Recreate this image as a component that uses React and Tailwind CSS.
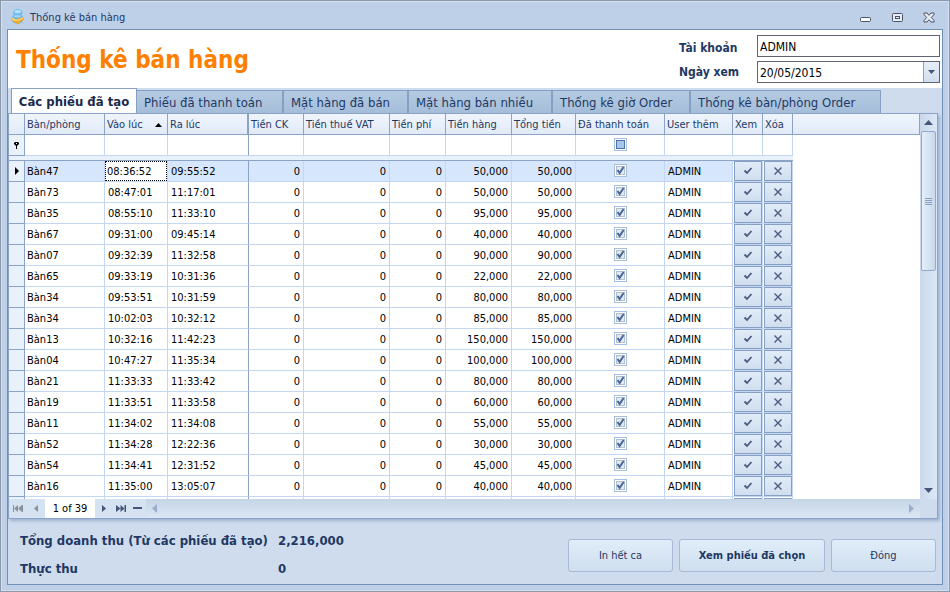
import React, { useEffect, useRef } from "react";

const rows = [
  ["Bàn47", "08:36:52", "09:55:52", "50,000"],
  ["Bàn73", "08:47:01", "11:17:01", "50,000"],
  ["Bàn35", "08:55:10", "11:33:10", "95,000"],
  ["Bàn67", "09:31:00", "09:45:14", "40,000"],
  ["Bàn07", "09:32:39", "11:32:58", "90,000"],
  ["Bàn65", "09:33:19", "10:31:36", "22,000"],
  ["Bàn34", "09:53:51", "10:31:59", "80,000"],
  ["Bàn34", "10:02:03", "10:32:12", "85,000"],
  ["Bàn13", "10:32:16", "11:42:23", "150,000"],
  ["Bàn04", "10:47:27", "11:35:34", "100,000"],
  ["Bàn21", "11:33:33", "11:33:42", "80,000"],
  ["Bàn19", "11:33:51", "11:33:58", "60,000"],
  ["Bàn11", "11:34:02", "11:34:08", "55,000"],
  ["Bàn52", "11:34:28", "12:22:36", "30,000"],
  ["Bàn54", "11:34:41", "12:31:52", "45,000"],
  ["Bàn16", "11:35:00", "13:05:07", "40,000"],
];

const tabs = [
  ["Phiếu đã thanh toán", "w-[147px] border-r-2"],
  ["Mặt hàng đã bán", "w-[125px] border-r-2"],
  ["Mặt hàng bán nhiều", "w-[144px] border-r-2"],
  ["Thống kê giờ Order", "w-[138px] border-r-2"],
  ["Thống kê bàn/phòng Order", "w-[190px] border-r"],
];

const headers = [
  "Bàn/phòng", "Vào lúc", "Ra lúc", "Tiền CK", "Tiền thuế VAT", "Tiền phí",
  "Tiền hàng", "Tổng tiền", "Đã thanh toán", "User thêm", "Xem", "Xóa",
];

const base = "border-r border-b border-[#c3d7f3] p-0";

function Triangle({ dir, className }) {
  const shapes = {
    up: "M0 5 L4.5 0 L9 5 Z",
    down: "M0 0 L9 0 L4.5 5 Z",
    left: "M5 0 L5 9 L0 4.5 Z",
    right: "M0 0 L5 4.5 L0 9 Z",
  };
  const tall = dir === "left" || dir === "right";
  return (
    <svg width={tall ? 5 : 9} height={tall ? 9 : 5} className={className} fill="currentColor" aria-hidden="true">
      <path d={shapes[dir]} />
    </svg>
  );
}

function CheckBox({ label, mixed }) {
  const ref = useRef(null);
  useEffect(() => {
    ref.current.indeterminate = Boolean(mixed);
  }, [mixed]);
  return (
    <span className="mx-auto grid size-[13px]">
      <input
        ref={ref}
        type="checkbox"
        aria-label={label}
        defaultChecked={!mixed}
        className="col-start-1 row-start-1 size-[13px] appearance-none border border-[#a6bfe0] bg-white"
      />
      <svg width="13" height="13" viewBox="0 0 13 13" className="pointer-events-none col-start-1 row-start-1" aria-hidden="true">
        {mixed ? (
          <rect x="2.5" y="2.5" width="8" height="8" fill="#a9c6e8" stroke="#4f73a8" />
        ) : (
          <>
            <rect x="2.5" y="2.5" width="8" height="8" fill="#e4e9f0" stroke="#b4bdca" />
            <path d="M3.5 6 L5.6 9 L9.6 3" fill="none" stroke="#46669a" strokeWidth="2" />
          </>
        )}
      </svg>
    </span>
  );
}

function GridButton({ kind, label }) {
  return (
    <button
      type="button"
      aria-label={label}
      className="ml-px flex h-5 w-7 items-center justify-center border border-[#869fc3] bg-linear-to-b from-[#e1ecf8] to-[#cfdeef] text-[#4b5a80]"
    >
      <svg width="10" height="10" viewBox="0 0 10 10" fill="none" stroke="currentColor" aria-hidden="true">
        {kind === "check" ? (
          <path d="M1.5 4.5 L4 7 L8.5 2" strokeWidth="1.8" />
        ) : (
          <path d="M1.5 1.5 L8.5 8.5 M8.5 1.5 L1.5 8.5" strokeWidth="1.4" />
        )}
      </svg>
    </button>
  );
}

function DataRow({ row, first }) {
  const [table, start, end, total] = row;
  const cell = `${base} pt-[2px]`;
  const num = `${base} pt-[2px] pr-[3px] text-right`;
  return (
    <tr className={first ? "h-[21px] bg-[#d5e6fd]" : "h-[21px] bg-white"}>
      <td className="border-r border-b border-[#8ba3c7] bg-[#e9f1fb] p-0">
        {first && (
          <svg width="4" height="8" className="ml-[6px]" aria-hidden="true"><path d="M0 0 L4 4 L0 8 Z" /></svg>
        )}
      </td>
      <td className={`${cell} pl-[2px]`}>{table}</td>
      {first ? (
        <td className={`${base} bg-white`}>
          <span className="block h-5 border border-dotted border-black pl-px leading-[20px]">{start}</span>
        </td>
      ) : (
        <td className={`${cell} pl-[3px]`}>{start}</td>
      )}
      <td className="border-r border-b border-r-[#8ba3c7] border-b-[#c3d7f3] p-0 pt-[2px] pl-[3px]">{end}</td>
      <td className={num}>0</td>
      <td className={num}>0</td>
      <td className={num}>0</td>
      <td className={num}>{total}</td>
      <td className={num}>{total}</td>
      <td className={`${base} pb-px`}><CheckBox label={`Đã thanh toán ${table}`} /></td>
      <td className={`${cell} pl-[3px]`}>ADMIN</td>
      <td className={`${base} bg-white`}><GridButton kind="check" label={`Xem ${table}`} /></td>
      <td className={`${base} bg-white`}><GridButton kind="cross" label={`Xóa ${table}`} /></td>
      <td className="bg-white p-0" />
    </tr>
  );
}

function NextRowEdge() {
  return (
    <tr className="h-[21px] bg-white">
      <td className="border-r border-[#8ba3c7] bg-[#e9f1fb] p-0" />
      {headers.map((name, i) => (
        <td key={name} className={`border-r p-0 ${i === 2 ? "border-[#8ba3c7]" : "border-[#c3d7f3]"}`}>
          {i > 9 && <span className="ml-px block h-5 w-7 border border-[#869fc3] bg-[#e1ecf8]" />}
        </td>
      ))}
      <td className="p-0" />
    </tr>
  );
}

function Grid() {
  return (
    <table className="w-full table-fixed border-separate border-spacing-0 text-left text-[11px] leading-[14px] text-black">
      <colgroup>
        <col className="w-[16px]" />
        <col className="w-[80px]" />
        <col className="w-[63px]" />
        <col className="w-[81px]" />
        <col className="w-[55px]" />
        <col className="w-[86px]" />
        <col className="w-[56px]" />
        <col className="w-[66px]" />
        <col className="w-[64px]" />
        <col className="w-[89px]" />
        <col className="w-[68px]" />
        <col className="w-[30px]" />
        <col className="w-[30px]" />
        <col />
      </colgroup>
      <thead>
        <tr className="h-[21px] bg-linear-to-b from-[#f0f5fc] to-[#dfeaf8] text-[#1f3864]">
          <th className="border-r border-b border-[#8ba3c7] p-0" aria-label="Chọn dòng" />
          {headers.map((name, i) => (
            <th
              key={name}
              className={`border-b border-[#8ba3c7] p-0 pt-[2px] pl-[2px] font-normal whitespace-nowrap ${i === 2 ? "border-r-2" : "border-r"}`}
            >
              {i === 1 ? (
                <span className="flex items-center justify-between pr-[5px]">
                  {name}
                  <svg width="7" height="4" aria-hidden="true"><path d="M0 4 L3.5 0 L7 4 Z" /></svg>
                </span>
              ) : name}
            </th>
          ))}
          <th className="border-r border-b border-[#8ba3c7] p-0" aria-label="Trống" />
        </tr>
        <tr className="h-[21px] bg-white">
          <td className="border-r border-b border-[#8ba3c7] bg-[#e9f1fb] p-0">
            <svg width="5" height="7" viewBox="0 0 5 7" className="ml-[5px]" aria-hidden="true">
              <path d="M1 0 H4 L5 1 V2 L3 4 V7 H2 V4 L0 2 V1 Z" fill="black" />
              <rect x="2" y="1" width="1" height="1" fill="white" />
            </svg>
          </td>
          {headers.map((name, i) => (
            <td
              key={name}
              className={`border-r border-b border-b-[#c3d7f3] p-0 pb-px ${i === 2 ? "border-r-[#8ba3c7]" : "border-r-[#c3d7f3]"}`}
            >
              {i === 8 && <CheckBox label="Lọc đã thanh toán" mixed />}
            </td>
          ))}
          <td className="p-0" />
        </tr>
        <tr className="h-[5px]">
          <td colSpan={13} className="border-b border-[#8ba3c7] bg-[#e9f1fb] p-0" />
          <td className="p-0" />
        </tr>
      </thead>
      <tbody>
        {rows.map((row, i) => (
          <DataRow key={row[1]} row={row} first={i === 0} />
        ))}
        <NextRowEdge />
      </tbody>
    </table>
  );
}

function VerticalScroll() {
  return (
    <div className="flex w-[17px] flex-col items-center bg-linear-to-r from-[#c9d8ea] to-[#dce8f5] text-[#475579]">
      <button type="button" aria-label="Cuộn lên" className="flex h-[17px] w-full items-center justify-center">
        <Triangle dir="up" />
      </button>
      <div className="flex h-[140px] w-[15px] flex-col items-center justify-center gap-px rounded-[2px] border border-[#93a9cb] bg-linear-to-r from-[#e6effa] to-[#c8d8eb]">
        <i className="h-px w-[7px] bg-[#869fc3]" />
        <i className="h-px w-[7px] bg-[#869fc3]" />
        <i className="h-px w-[7px] bg-[#869fc3]" />
        <i className="h-px w-[7px] bg-[#869fc3]" />
      </div>
      <div className="flex-1" />
      <button type="button" aria-label="Cuộn xuống" className="flex h-[17px] w-full items-center justify-center">
        <Triangle dir="down" />
      </button>
    </div>
  );
}

function Navigator() {
  return (
    <div className="flex h-[19px] shrink-0 items-stretch bg-[#d5e2f1] text-[11px] text-black">
      <button type="button" aria-label="Đầu" className="flex w-[18px] items-center justify-center text-[#8b909b]">
        <svg width="10" height="7" fill="currentColor" aria-hidden="true">
          <path d="M0 0 H1 V7 H0 Z M5 0 V7 L1 3.5 Z M9 0 V7 L5 3.5 Z M9 0 H10 V7 H9 Z" />
        </svg>
      </button>
      <button type="button" aria-label="Trước" className="flex w-[18px] items-center justify-center text-[#8b909b]">
        <svg width="4" height="7" fill="currentColor" aria-hidden="true"><path d="M4 0 V7 L0 3.5 Z" /></svg>
      </button>
      <span className="flex w-[50px] items-center justify-center bg-white pt-[2px]">1 of 39</span>
      <button type="button" aria-label="Sau" className="flex w-[18px] items-center justify-center text-[#475579]">
        <svg width="4" height="7" fill="currentColor" aria-hidden="true"><path d="M0 0 V7 L4 3.5 Z" /></svg>
      </button>
      <button type="button" aria-label="Cuối" className="flex w-[15px] items-center justify-center text-[#475579]">
        <svg width="10" height="7" fill="currentColor" aria-hidden="true">
          <path d="M0 0 V7 L4.5 3.5 Z M4.5 0 V7 L8.5 3.5 Z M8.5 0 H10 V7 H8.5 Z" />
        </svg>
      </button>
      <button type="button" aria-label="Xóa dòng" className="flex w-[18px] items-center justify-center text-[#475579]">
        <i className="mb-px h-[2px] w-[9px] bg-current" />
      </button>
      <div className="flex flex-1 items-center justify-between bg-linear-to-b from-[#c6d6e8] to-[#dae6f2] px-[6px] text-[#9daccc]">
        <Triangle dir="left" />
        <Triangle dir="right" />
      </div>
      <div className="w-[17px] bg-[#cfdcee]" />
    </div>
  );
}

function TitleBar() {
  return (
    <header className="flex h-[28px] shrink-0 items-center gap-[6px] pt-[4px] pr-[8px] pl-[4px] text-[11px] text-[#1f3864]">
      <svg width="13" height="16" viewBox="0 0 13 16" aria-hidden="true">
        <ellipse cx="6.5" cy="10" rx="6" ry="5" fill="#6fb6e8" />
        <ellipse cx="6.7" cy="3.8" rx="4.8" ry="3.7" fill="#6fbdf0" />
        <ellipse cx="6.7" cy="2.6" rx="3.4" ry="1.7" fill="#b9e4fc" />
        <ellipse cx="6.5" cy="7.2" rx="3.4" ry="1" fill="#a8d8f6" />
        <path d="M0.4 8 C2 10 4.5 10.4 6.5 10.2 L6.5 8.4 L8.6 9.8 L12.4 8 C13 11 11 12.6 9.4 13 L6.8 15.8 L4.4 13.6 C1.6 13 0.2 11 0.4 8 Z" fill="#f0ab2c" />
        <path d="M1 9 C3 11.4 6 11.6 8 11 L11.8 9" fill="none" stroke="#ffdc78" strokeWidth="1.2" />
      </svg>
      <span className="flex-1 pt-[2px]">Thống kê bán hàng</span>
      <div className="flex gap-[20px] text-[#4b5263]">
        <button type="button" aria-label="Thu nhỏ" className="flex size-[12px] items-center justify-center">
          <svg width="11" height="11" viewBox="0 0 11 11" fill="#fff" stroke="currentColor"><rect x="0.5" y="5.5" width="10" height="4" rx="1" /></svg>
        </button>
        <button type="button" aria-label="Phóng to" className="flex size-[12px] items-center justify-center">
          <svg width="11" height="11" viewBox="0 0 11 11" fill="#e6edf6" stroke="currentColor">
            <rect x="0.5" y="1.5" width="10" height="8" rx="1" />
            <rect x="3.5" y="4.5" width="4" height="2" />
          </svg>
        </button>
        <button type="button" aria-label="Đóng cửa sổ" className="flex size-[12px] items-center justify-center">
          <svg width="12" height="11" viewBox="0 0 12 11" fill="#e6edf6" stroke="currentColor">
            <path d="M1 1 H4 L6 3.3 L8 1 H11 V2.5 L8.3 5.5 L11 8.5 V10 H8 L6 7.7 L4 10 H1 V8.5 L3.7 5.5 L1 2.5 Z" />
          </svg>
        </button>
      </div>
    </header>
  );
}

const actionClass =
  "h-[33px] rounded-[3px] border border-[#a9b8d3] bg-linear-to-b from-[#e0edfa] to-[#cfdfef] pt-[2px] text-[11px] text-[#1f3864]";

export default function App() {
  return (
    <div className="flex h-screen flex-col overflow-hidden border border-[#8d99a8] bg-[#bed0e8] px-[6px] pb-[6px] font-['DejaVu_Sans_Condensed','DejaVu_Sans',sans-serif] shadow-[inset_0_0_0_1px_#d3e0f1]">
      <TitleBar />
      <main className="flex min-h-0 flex-1 flex-col border border-[#6f8fb5] bg-[#cfdcee]">
        <section className="flex h-[58px] shrink-0 items-start justify-between bg-white pl-2">
          <h1 className="pt-[15px] text-[24px] leading-[30px] font-bold text-[#ff8000]">Thống kê bán hàng</h1>
          <form className="grid grid-cols-[78px_183px] gap-y-1 pt-[5px] pr-[2px] text-[#1f3864]">
            <label htmlFor="account" className="pt-[4px] text-[12px] leading-[18px] font-bold">Tài khoản</label>
            <input id="account" type="text" defaultValue="ADMIN" className="h-[22px] w-full border border-[#5f6470] bg-white px-[2px] pt-[2px] text-[12px] text-black" />
            <label htmlFor="day" className="pt-[2px] text-[12px] leading-[18px] font-bold">Ngày xem</label>
            <div className="grid grid-cols-[1fr_16px] border border-[#5f6470]">
              <select id="day" className="col-span-2 col-start-1 row-start-1 h-[20px] appearance-none bg-white px-[2px] pt-[2px] text-[12px] text-black">
                <option>20/05/2015</option>
              </select>
              <span className="pointer-events-none col-start-2 row-start-1 flex items-center justify-center border-l border-[#8ba3c7] bg-linear-to-b from-[#e6eff9] to-[#cfdeef] text-[#475579]">
                <svg width="7" height="4" fill="currentColor" aria-hidden="true"><path d="M0 0 H7 L3.5 4 Z" /></svg>
              </span>
            </div>
          </form>
        </section>
        <nav className="flex h-[25px] shrink-0 items-end pl-[3px] text-[13px] text-[#1f3864]" role="tablist">
          <button type="button" role="tab" aria-selected="true" className="h-[25px] w-[126px] border border-b-0 border-[#869fc3] bg-white pt-px font-bold whitespace-nowrap text-[#1b2a4a]">
            Các phiếu đã tạo
          </button>
          {tabs.map(([name, frame]) => (
            <button
              key={name}
              type="button"
              role="tab"
              aria-selected="false"
              className={`${frame} h-[23px] border-t border-[#869fc3] bg-linear-to-b from-[#b5cbe3] to-[#a5bdd9] pt-px pl-[7px] text-left whitespace-nowrap`}
            >
              {name}
            </button>
          ))}
        </nav>
        <section className="mr-[4px] flex min-h-0 flex-1 flex-col border border-[#8ba3c7] shadow-[2px_2px_3px_#9db2cf]">
          <div className="flex min-h-0 flex-1">
            <div className="min-w-0 flex-1 overflow-hidden bg-white">
              <Grid />
            </div>
            <VerticalScroll />
          </div>
          <Navigator />
        </section>
        <footer className="flex h-[65px] shrink-0 items-start justify-between pr-[6px] pl-[12px]">
          <dl className="grid grid-cols-[258px_auto] gap-y-[8px] pt-[12px] text-[13px] leading-[20px] font-bold text-[#1f3864]">
            <dt>Tổng doanh thu (Từ các phiếu đã tạo)</dt>
            <dd>2,216,000</dd>
            <dt>Thực thu</dt>
            <dd>0</dd>
          </dl>
          <div className="flex gap-[6px] pt-[20px]">
            <button type="button" className={`${actionClass} w-[105px]`}>In hết ca</button>
            <button type="button" className={`${actionClass} w-[146px] font-bold`}>Xem phiếu đã chọn</button>
            <button type="button" className={`${actionClass} w-[105px]`}>Đóng</button>
          </div>
        </footer>
      </main>
    </div>
  );
}
